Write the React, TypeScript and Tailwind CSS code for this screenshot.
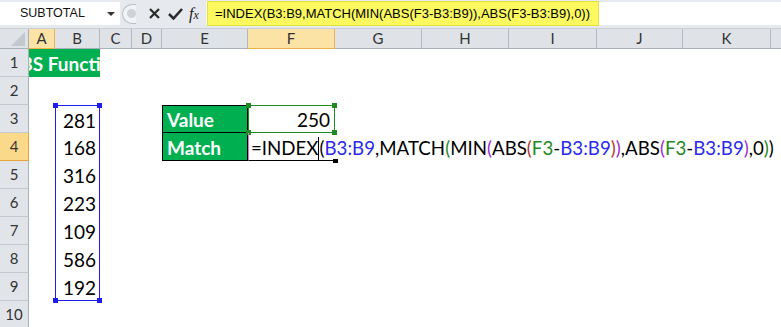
import React from "react";

const colHeads = [
  { label: "A", cls: "w-[26px]", on: true },
  { label: "B", cls: "w-[45px]" },
  { label: "C", cls: "w-[32px]" },
  { label: "D", cls: "w-[30px]" },
  { label: "E", cls: "w-[86px]" },
  { label: "F", cls: "w-[87px]", on: true },
  { label: "G", cls: "w-[87px]" },
  { label: "H", cls: "w-[87px]" },
  { label: "I", cls: "w-[88px]" },
  { label: "J", cls: "w-[86px]" },
  { label: "K", cls: "w-[88px]" },
];

const values = ["281", "168", "316", "223", "109", "586", "192"];

// colours Excel gives each piece of the formula while editing
const formula: [string, string][] = [
  ["=INDEX(", "text-black"],
  ["B3:B9", "text-[#2a2af0]"],
  [",MATCH", "text-black"],
  ["(", "text-[#1f8a1f]"],
  ["MIN", "text-black"],
  ["(", "text-[#9a2fd0]"],
  ["ABS", "text-black"],
  ["(", "text-[#b03a2e]"],
  ["F3", "text-[#1f8a1f]"],
  ["-", "text-black"],
  ["B3:B9", "text-[#2a2af0]"],
  [")", "text-[#b03a2e]"],
  [")", "text-[#9a2fd0]"],
  [",ABS", "text-black"],
  ["(", "text-[#9a2fd0]"],
  ["F3", "text-[#1f8a1f]"],
  ["-", "text-black"],
  ["B3:B9", "text-[#2a2af0]"],
  [")", "text-[#9a2fd0]"],
  [",0", "text-black"],
  [")", "text-[#1f8a1f]"],
  [")", "text-black"],
];

function FormulaBar() {
  return (
    <div className="h-[29px] bg-[#e6e9ed] border-b border-[#c9ced5]">
      <div className="flex h-[23px] pt-[2px] box-content">
        {/* Name box */}
        <div className="w-[120px] h-full bg-white flex items-center relative font-['Liberation_Sans',sans-serif] text-[12.5px] text-[#111]">
          <span className="pl-[20px]">SUBTOTAL</span>
          <svg className="absolute left-[107px] top-[10px]" width="8" height="5" viewBox="0 0 8 5">
            <polygon points="0,0 8,0 4,4" fill="#333" />
          </svg>
        </div>
        {/* buttons */}
        <div className="w-[86px] h-full flex items-center bg-[#e6e9ed]">
          <div className="ml-[2px] w-[14px] h-[20px] rounded-l-full border border-r-0 border-[#b8bec6] bg-[#f2f3f5] flex items-center justify-center">
            <div className="w-[9px] h-[9px] rounded-full bg-[#cfd3d8] ml-[4px]" />
          </div>
          <svg className="ml-[13px]" width="11" height="11" viewBox="0 0 11 11">
            <path d="M1 1 L10 10 M10 1 L1 10" stroke="#2b2b2b" strokeWidth="2.2" />
          </svg>
          <svg className="ml-[8px]" width="15" height="12" viewBox="0 0 15 12">
            <path d="M1 6 L5.5 10.5 L14 1" stroke="#2b2b2b" strokeWidth="2.6" fill="none" />
          </svg>
          <span className="ml-[6px] font-['Liberation_Serif',serif] italic text-[16px] text-[#222] leading-none">
            f<span className="text-[12px]">x</span>
          </span>
        </div>
        {/* formula input */}
        <div className="flex-1 h-full bg-white">
          <div className="ml-[1px] -mt-[1px] w-[392px] h-[25px] bg-[#fbf95f] border border-[#e5e23a] flex items-center pl-[7px] font-['Liberation_Sans',sans-serif] text-[13px] text-black whitespace-nowrap">
            =INDEX(B3:B9,MATCH(MIN(ABS(F3-B3:B9)),ABS(F3-B3:B9),0))
          </div>
        </div>
      </div>
    </div>
  );
}

function HeaderRow() {
  return (
    <div className="flex h-[20px] bg-[#dfe3e8] border-b border-[#a9afb7] text-[15px] text-[#333]">
      <div className="w-[29px] border-r border-[#a9afb7] relative">
        <svg className="absolute left-[11px] top-[3px]" width="14" height="14" viewBox="0 0 14 14">
          <polygon points="14,0 14,14 0,14" fill="#c3c8ce" />
        </svg>
      </div>
      {colHeads.map((c) => (
        <div
          key={c.label}
          className={`${c.cls} flex items-center justify-center border-r ${
            c.on ? "bg-[#fbe3a6] border-[#f0b04a] border-b border-b-[#f0b04a] -mb-px" : "border-[#b3b9c0]"
          }`}
        >
          {c.label}
        </div>
      ))}
      <div className="flex-1" />
    </div>
  );
}

function RowHead({ n, on }: { n: number; on?: boolean }) {
  return (
    <div
      className={`w-[29px] h-full shrink-0 flex items-center justify-center text-[15px] text-[#333] border-r border-b ${
        on ? "bg-[#fbd98a] border-[#e9a23a]" : "bg-[#e1e5ea] border-r-[#a9afb7] border-b-[#c4c9cf]"
      }`}
    >
      {n}
    </div>
  );
}

function ValueCell({ v, first, last }: { v: string; first?: boolean; last?: boolean }) {
  return (
    <div
      className={`w-[45px] h-full relative flex items-center justify-end pr-[3px] pt-[3px] border-x border-[#1d1df2] ${
        first ? "border-t" : ""
      } ${last ? "border-b" : ""}`}
    >
      {first && (
        <>
          <div className="absolute -left-[3px] -top-[3px] w-[5px] h-[5px] bg-[#1d1df2]" />
          <div className="absolute -right-[3px] -top-[3px] w-[5px] h-[5px] bg-[#1d1df2]" />
        </>
      )}
      {last && (
        <>
          <div className="absolute -left-[3px] -bottom-[3px] w-[5px] h-[5px] bg-[#1d1df2]" />
          <div className="absolute -right-[3px] -bottom-[3px] w-[5px] h-[5px] bg-[#1d1df2]" />
        </>
      )}
      {v}
    </div>
  );
}

function Row({ n, on, children }: { n: number; on?: boolean; children?: React.ReactNode }) {
  return (
    <div className="flex h-[28px] text-[19px]">
      <RowHead n={n} on={on} />
      {children}
    </div>
  );
}

export default function App() {
  return (
    <div className="w-[781px] h-[327px] overflow-hidden bg-white font-['Lato',sans-serif] text-black">
      <FormulaBar />
      <HeaderRow />

      <Row n={1}>
        <div className="w-[71px] h-full bg-[#00b050] overflow-hidden flex items-center pt-[3px]">
          <span className="ml-[-22px] whitespace-nowrap font-bold text-white">ABS Function</span>
        </div>
      </Row>

      <Row n={2} />

      <Row n={3}>
        <div className="w-[26px]" />
        <ValueCell v={values[0]} first />
        <div className="w-[62px]" />
        <div className="w-[86px] h-full bg-[#00b050] border border-black flex items-center pl-[4px] pt-[3px] font-bold text-white">
          Value
        </div>
        <div className="w-[87px] h-full relative border border-[#1f8a1f] flex items-center justify-end pr-[4px] pt-[3px]">
          <div className="absolute -left-[3px] -top-[3px] w-[5px] h-[5px] bg-[#1f8a1f]" />
          <div className="absolute -right-[3px] -top-[3px] w-[5px] h-[5px] bg-[#1f8a1f]" />
          <div className="absolute -left-[3px] -bottom-[3px] w-[5px] h-[5px] bg-[#1f8a1f]" />
          <div className="absolute -right-[3px] -bottom-[3px] w-[5px] h-[5px] bg-[#1f8a1f]" />
          250
        </div>
      </Row>

      <Row n={4} on>
        <div className="w-[26px]" />
        <ValueCell v={values[1]} />
        <div className="w-[62px]" />
        <div className="w-[86px] h-full bg-[#00b050] border-x border-b border-black flex items-center pl-[4px] pt-[3px] font-bold text-white">
          Match
        </div>
        <div className="w-[87px] h-full relative z-10 border-l border-[#e46fd0] border-b border-b-black flex items-center pl-[2px] pt-[3px]">
          <span className="whitespace-nowrap text-[18.7px]">
            {formula.map(([t, c], i) => (
              <React.Fragment key={i}>
                <span className={c}>{i === 0 ? "=INDEX" : t}</span>
                {i === 0 && (
                  <>
                    <span className="inline-block w-px h-[24px] bg-black align-[-6px]" />
                    <span className="text-black">(</span>
                  </>
                )}
              </React.Fragment>
            ))}
          </span>
          <div className="absolute -right-[3px] -bottom-[3px] w-[5px] h-[4px] bg-black" />
        </div>
      </Row>

      {values.slice(2).map((v, i) => (
        <Row key={v} n={i + 5}>
          <div className="w-[26px]" />
          <ValueCell v={v} last={i === 4} />
        </Row>
      ))}

      <Row n={10} />
    </div>
  );
}
